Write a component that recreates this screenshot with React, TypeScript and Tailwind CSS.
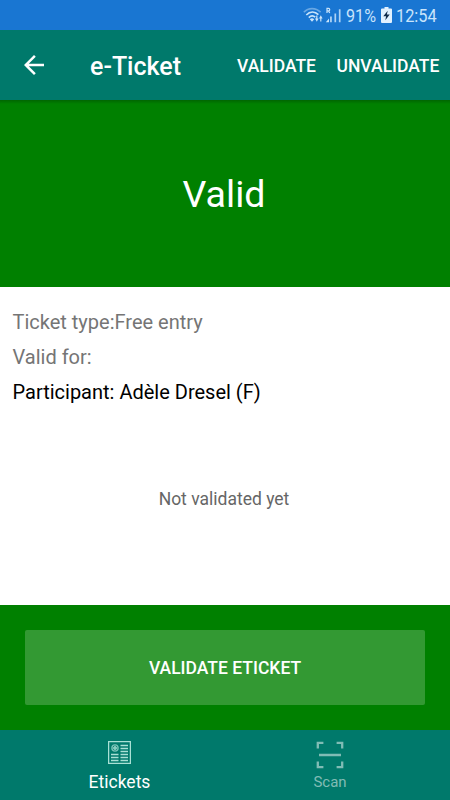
import type { ReactNode } from 'react';

function StatusBar() {
  return (
    <div className="flex h-[30px] items-center bg-[#1976d2] pl-[303px] text-[#c9e4fb]">
      <svg className="h-[18px] w-[51px] shrink-0" viewBox="0 0 51 18" fill="none">
        <g stroke="currentColor" strokeWidth="1.6">
          <path d="M.8 6.2C5.4 1.4 12.6 1.4 17.6 6.2" opacity=".45" />
          <path d="M3.3 9C7 5.2 11.8 5.2 15.4 8.6" />
          <path d="M5.8 11.6C7.8 9.5 10.4 9.5 12.3 11.2" />
        </g>
        <path d="M6.8 13.2Q9 11.3 11.2 13.2L9 15.8Z" fill="currentColor" />
        <path d="M12 12.5h3.6L13.8 15.7ZM16 12.5h3.6L17.8 9.3Z" fill="currentColor" />
        <path d="M13.8 9.5v3.5M17.8 12v3.5" stroke="currentColor" strokeWidth="1.2" />
        <path d="M24 7V2.4h1.5a1.2 1.2 0 0 1 0 2.5H24M25.4 4.9l1.4 2.1" stroke="currentColor" strokeWidth="1.2" />
        <path d="M22.8 16.2L26 12.4v3.8ZM27.2 10.6h1.5v5.6h-1.5Z" fill="currentColor" />
        <path d="M32.3 7.4v8.8M36.7 3.2v13" stroke="currentColor" strokeWidth="1.7" opacity=".85" />
      </svg>
      <span className="-ml-[8px] w-[30px] text-[19px] leading-[30px]">
        <span className="inline-block origin-left scale-x-[0.85] whitespace-nowrap pt-[2px]">91%</span>
      </span>
      <svg className="ml-[5px] h-[16px] w-[11px] shrink-0" viewBox="0 0 11 16">
        <path d="M3.5 0h4v1.5H10q1 0 1 1V15q0 1-1 1H1q-1 0-1-1V2.5q0-1 1-1h2.5Z" fill="#e1f1fe" />
        <path d="M6.7 3.8L2.3 9.2h2.8l-.8 4 4.4-5.6H5.9Z" fill="#102c4a" />
      </svg>
      <span className="ml-[4px] text-[19px] leading-[30px]">
        <span className="inline-block origin-left scale-x-[0.86] whitespace-nowrap pt-[2px]">12:54</span>
      </span>
    </div>
  );
}

function Header() {
  return (
    <header className="flex h-[70px] items-center bg-[#00796b] text-white">
      <svg className="-mt-px ml-[19px] h-[30px] w-[30px]" viewBox="0 0 24 24" fill="currentColor">
        <path d="M20 11H7.83l5.59-5.59L12 4l-8 8 8 8 1.41-1.41L7.83 13H20v-2z" />
      </svg>
      <h1 className="ml-[41px] mt-[4px] w-[147px] text-[25px] font-medium">e-Ticket</h1>
      <button className="mt-[3px] text-[17.5px] font-medium">VALIDATE</button>
      <button className="ml-[20.5px] mt-[3px] text-[17.5px] font-medium">UNVALIDATE</button>
    </header>
  );
}

function TicketInfo() {
  return (
    <section className="flex h-[317.6px] flex-col bg-white pt-[18px]">
      <div className="px-[12.5px] text-[20px] leading-[35px] text-[#757575]">
        <p>Ticket type:Free entry</p>
        <p>Valid for:</p>
        <p className="text-black">Participant: Adèle Dresel (F)</p>
      </div>
      <p className="mt-[72px] pr-[2px] text-center text-[17.5px] leading-[35px] text-[#666]">Not validated yet</p>
    </section>
  );
}

function Tab({ label, active, children }: { label: string; active?: boolean; children: ReactNode }) {
  return (
    <button
      className={
        active
          ? 'flex w-[239px] flex-col items-center text-[17.5px] text-white'
          : 'flex w-[182px] flex-col items-center text-[15px] text-[#80bcb5]'
      }
    >
      {children}
      <span className="leading-[24px]">{label}</span>
    </button>
  );
}

function App() {
  return (
    <div className="flex h-[800px] w-[450px] flex-col overflow-hidden bg-white font-['Roboto',sans-serif]">
      <StatusBar />
      <Header />
      <section className="h-[187.4px] bg-[#008000] text-[37.5px] text-white">
        <div className="h-[4px] bg-linear-to-b from-[#006600] to-[#008000]" />
        <p className="pr-[2px] pt-[62px] text-center leading-[56px]">Valid</p>
      </section>
      <TicketInfo />
      <section className="h-[125px] bg-[#008000] p-[25px]">
        <button className="h-[75px] w-full rounded-[2px] bg-[#339933] pt-[2px] text-[17.5px] font-medium text-white">
          VALIDATE ETICKET
        </button>
      </section>
      <nav className="flex h-[70px] bg-[#00796b]">
        <Tab label="Etickets" active>
          <svg className="mb-[6px] mt-[11px] h-[23px] w-[23px] text-[#a9e0d5]" viewBox="0 0 23 23" fill="none" stroke="currentColor">
            <rect x=".6" y=".6" width="21.8" height="21.8" strokeWidth="1.3" />
            <circle cx="7" cy="7" r="3.1" strokeWidth="1.4" opacity=".7" />
            <circle cx="7" cy="7" r="1.5" fill="currentColor" opacity=".8" />
            <path
              d="M12.5 4.5h7.5M12.5 7.5h7.5M12.5 10.5h7.5M3 13.5h7.5M12.5 13.5h7.5M3 16.5h7.5M12.5 16.5h7.5M3 19.5h7.5M12.5 19.5h7.5"
              strokeWidth="1.4"
            />
          </svg>
        </Tab>
        <Tab label="Scan">
          <svg className="mb-px mt-[11px] h-[28px] w-[28px]" viewBox="0 0 28 28" fill="none" stroke="currentColor" strokeWidth="2.3">
            <path d="M1.8 7.4V1.8H7.4M20.6 1.8h5.6V7.4M26.2 20.6v5.6H20.6M7.4 26.2H1.8V20.6M3 14h22" />
          </svg>
        </Tab>
      </nav>
    </div>
  );
}

export default App;
